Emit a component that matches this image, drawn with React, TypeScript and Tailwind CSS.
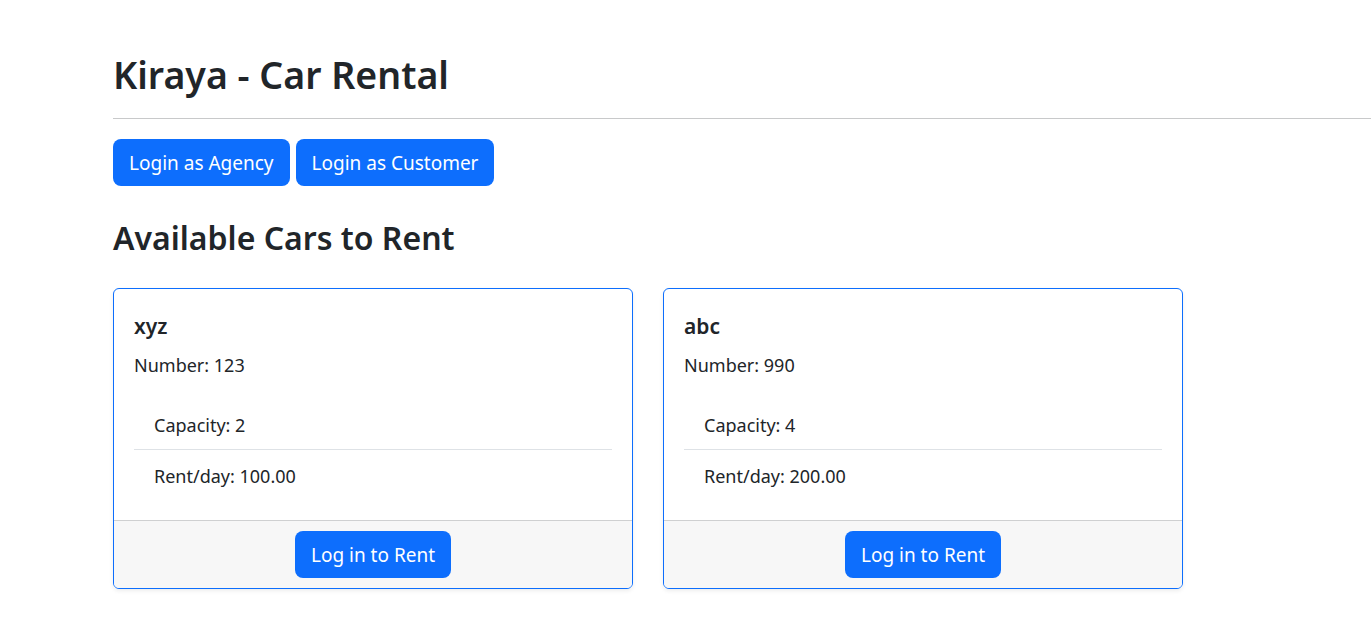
import React from "react";

const cars = [
  { name: "xyz", number: "123", capacity: 2, rent: "100.00" },
  { name: "abc", number: "990", capacity: 4, rent: "200.00" },
];

export default function App() {
  return (
    <div
      className="min-h-[642px] bg-white text-[#212529] pl-[113px]"
      style={{ fontFamily: '"Noto Sans", "Open Sans", sans-serif' }}
    >
      <h1 className="pt-[52px] text-[37.5px] leading-[46px] font-semibold">Kiraya - Car Rental</h1>
      <div className="mt-[20px] h-px bg-[#c8c9ca]" />
      <div className="mt-[20px] flex gap-[6px]">
        <button className="h-[47px] px-[16px] pt-[2px] rounded-[8px] bg-[#0d6efd] text-white text-[19px]">Login as Agency</button>
        <button className="h-[47px] px-[16px] pt-[2px] rounded-[8px] bg-[#0d6efd] text-white text-[19px]">Login as Customer</button>
      </div>
      <h2 className="mt-[33px] text-[32px] leading-[38px] font-semibold">Available Cars to Rent</h2>
      <div className="mt-[31px] flex gap-[30px]">
        {cars.map((c) => (
          <div
            key={c.name}
            className="w-[520px] h-[301px] flex flex-col border border-[#0d6efd] rounded-[6px] shadow-[0_2px_4px_rgba(0,0,0,0.075)] overflow-hidden"
          >
            <div className="flex-1 px-[20px] pt-[24px]">
              <h5 className="text-[21px] leading-[26px] font-semibold">{c.name}</h5>
              <p className="mt-[13px] text-[18px] leading-[27px]">Number: {c.number}</p>
              <ul className="mt-[23px] text-[18px]">
                <li className="px-[20px] h-[48px] flex items-center border-b border-[#dee2e6]">Capacity: {c.capacity}</li>
                <li className="px-[20px] h-[52px] flex items-center">Rent/day: {c.rent}</li>
              </ul>
            </div>
            <div className="h-[68px] shrink-0 border-t border-[#cfd0d1] bg-[#f7f7f7] flex items-center justify-center">
              <button className="h-[47px] px-[16px] pt-[2px] rounded-[8px] bg-[#0d6efd] text-white text-[19px]">Log in to Rent</button>
            </div>
          </div>
        ))}
      </div>
    </div>
  );
}
